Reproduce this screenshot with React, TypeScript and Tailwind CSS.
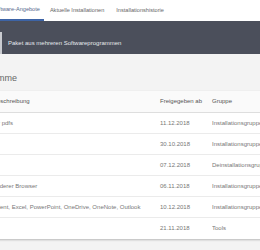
const ROWS = [
    { name: 'für pdfs', date: '11.12.2018', group: 'Installationsgruppe A' },
    { name: '', date: '30.10.2018', group: 'Installationsgruppe B' },
    { name: '', date: '07.12.2018', group: 'Deinstallationsgruppe' },
    { name: 'anderer Browser', date: '06.11.2018', group: 'Installationsgruppe C' },
    { name: 'Client, Excel, PowerPoint, OneDrive, OneNote, Outlook', date: '10.12.2018', group: 'Installationsgruppe D' },
    { name: '', date: '21.11.2018', group: 'Tools' },
];

export default function App() {
    return (
        <div className="w-[260px] h-[250px] overflow-hidden bg-[#f3f3f3] font-['Liberation_Sans',Arial,sans-serif]">
            {/* Tabs */}
            <div className="h-[21px] bg-white flex items-stretch text-[5.6px] text-[#666] whitespace-nowrap">
                <div className="ml-[-12px] px-[4px] flex items-center border-b-2 border-[#3d64a6] text-[#55698c]">
                    Software-Angebote
                </div>
                <div className="ml-[2px] px-[4px] flex items-center">Aktuelle Installationen</div>
                <div className="ml-[4px] px-[4px] flex items-center">Installationshistorie</div>
            </div>

            {/* Dark band */}
            <div className="h-[33px] bg-[#4b4f5b] pt-[11px]">
                <div className="h-[22px] border-l-2 border-[#c9cbd0] flex items-center pl-[6px] text-[6px] text-[#e6e8ec] whitespace-nowrap">
                    Paket aus mehreren Softwareprogrammen
                </div>
            </div>

            {/* Heading */}
            <div className="h-[37px] flex items-center pt-[12px] ml-[-30px] text-[9px] text-[#666] whitespace-nowrap">
                Programme
            </div>

            {/* Table */}
            <div className="ml-[-7px] w-[290px] bg-white shadow-[0_1px_2px_rgba(0,0,0,0.25)] text-[6px] text-[#777] whitespace-nowrap">
                <div className="h-[22px] grid grid-cols-[167px_52px_71px] items-center border-b border-[#dedede] text-[#555] bg-[#fafafa]">
                    <div>Beschreibung</div>
                    <div>Freigegeben ab</div>
                    <div>Gruppe</div>
                </div>
                {ROWS.map((row, i) => (
                    <div
                        key={i}
                        className={`h-[21px] grid grid-cols-[167px_52px_71px] items-center ${
                            i < ROWS.length - 1 ? 'border-b border-[#ebebeb]' : ''
                        }`}
                    >
                        <div className="overflow-hidden">{row.name}</div>
                        <div>{row.date}</div>
                        <div className="overflow-hidden">{row.group}</div>
                    </div>
                ))}
            </div>
        </div>
    );
}
